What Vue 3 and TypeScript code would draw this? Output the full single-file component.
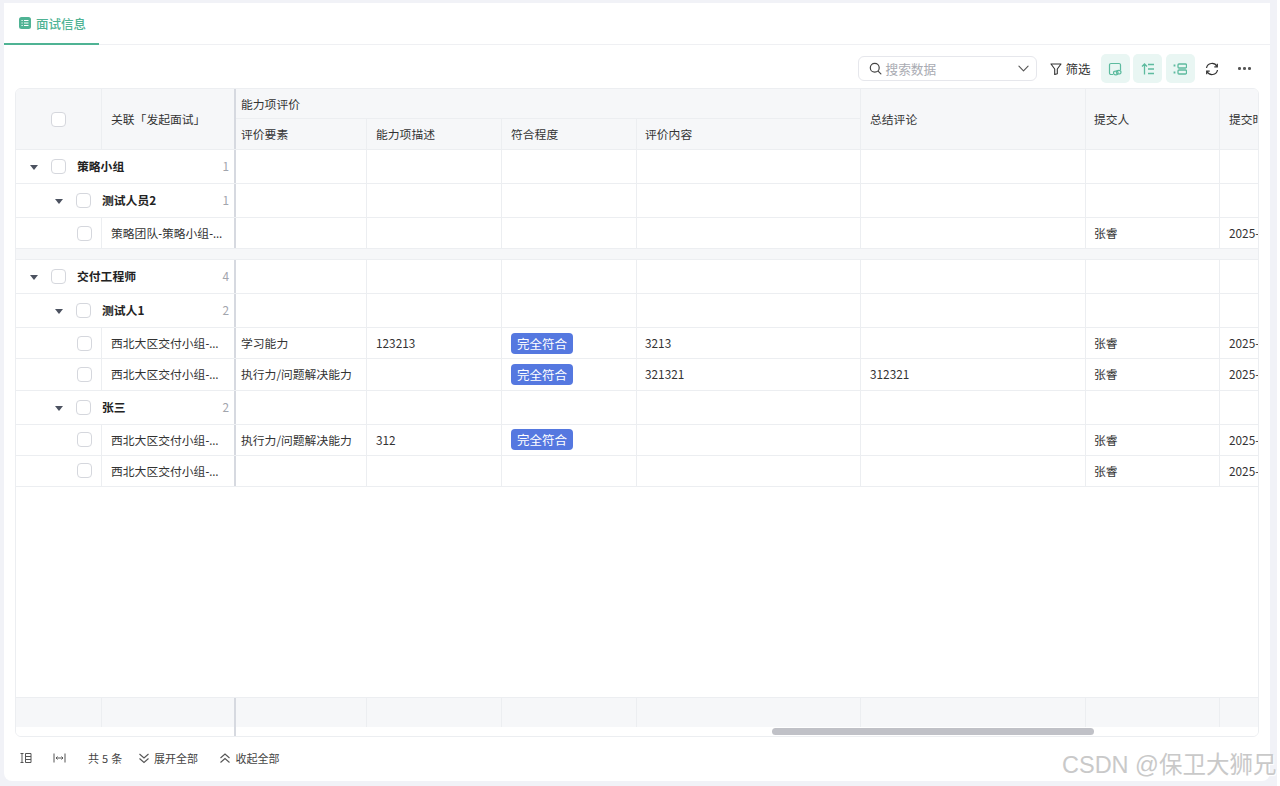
<script setup lang="ts">
type Row = {
  kind: 'group' | 'subgroup' | 'leaf' | 'spacer';
  name?: string;
  count?: number;
  element?: string;
  desc?: string;
  match?: boolean;
  content?: string;
  summary?: string;
  submitter?: string;
  time?: string;
};

const rows: Row[] = [
  { kind: 'group', name: '策略小组', count: 1 },
  { kind: 'subgroup', name: '测试人员2', count: 1 },
  { kind: 'leaf', name: '策略团队-策略小组-规划', submitter: '张睿', time: '2025-06-12' },
  { kind: 'spacer' },
  { kind: 'group', name: '交付工程师', count: 4 },
  { kind: 'subgroup', name: '测试人1', count: 2 },
  { kind: 'leaf', name: '西北大区交付小组-面试一', element: '学习能力', desc: '123213', match: true, content: '3213', submitter: '张睿', time: '2025-06-12' },
  { kind: 'leaf', name: '西北大区交付小组-面试二', element: '执行力/问题解决能力', match: true, content: '321321', summary: '312321', submitter: '张睿', time: '2025-06-12' },
  { kind: 'subgroup', name: '张三', count: 2 },
  { kind: 'leaf', name: '西北大区交付小组-面试三', element: '执行力/问题解决能力', desc: '312', match: true, submitter: '张睿', time: '2025-06-12' },
  { kind: 'leaf', name: '西北大区交付小组-面试四', submitter: '张睿', time: '2025-06-12' },
];
</script>

<template>
  <div class="page">
    <div class="card">
      <div class="tabs">
        <div class="tab">
          <svg class="tab-icon" viewBox="0 0 12 12" width="12" height="12">
            <rect width="12" height="12" rx="2.500" fill="#4fb394" />
            <path d="M2.500 3.500h1.200M5 3.500h4.500M2.500 6h1.200M5 6h4.500M2.500 8.500h1.200M5 8.500h4.500" stroke="#fff" stroke-width="1" fill="none" />
          </svg>
          <span>面试信息</span>
        </div>
      </div>

      <div class="toolbar">
        <div class="search">
          <svg viewBox="0 0 14 14" width="13" height="13" fill="none" stroke="#444" stroke-width="1.300">
            <circle cx="6.200" cy="6.200" r="4.800" />
            <path d="M9.800 9.800l3 3" stroke-linecap="round" />
          </svg>
          <span class="search-text">搜索数据</span>
          <svg class="search-arrow" viewBox="0 0 12 12" width="11" height="11" fill="none" stroke="#555" stroke-width="1.200">
            <path d="M1 3.500l5 5 5-5" stroke-linecap="round" stroke-linejoin="round" />
          </svg>
        </div>
        <div class="filter">
          <svg viewBox="0 0 12 12" width="12" height="12" fill="none" stroke="#333" stroke-width="1.100" stroke-linejoin="round">
            <path d="M1 1h10L7.300 6v4.800L4.700 11.500V6z" />
          </svg>
          <span>筛选</span>
        </div>
        <div class="tool-btn">
          <svg viewBox="0 0 14 14" width="14" height="14" fill="none" stroke="#5dbb9f" stroke-width="1.200">
            <path d="M5 12.500H3A1.500 1.500 0 0 1 1.500 11V3A1.500 1.500 0 0 1 3 1.500h8A1.500 1.500 0 0 1 12.500 3v5" />
            <ellipse cx="7.800" cy="11" rx="2.300" ry="1.800" />
            <ellipse cx="10.700" cy="10.200" rx="2.300" ry="1.800" />
          </svg>
        </div>
        <div class="tool-btn">
          <svg viewBox="0 0 14 14" width="14" height="14" fill="none" stroke="#5dbb9f" stroke-width="1.300">
            <path d="M7 2.500h6M7 7h6M7 11.500h6M3.500 12.500V2M1 4.500L3.500 2 6 4.500" />
          </svg>
        </div>
        <div class="tool-btn">
          <svg viewBox="0 0 14 14" width="14" height="14" fill="none" stroke="#5dbb9f" stroke-width="1.300">
            <rect x="5" y="2" width="8.500" height="4" rx="1" />
            <rect x="5" y="8" width="8.500" height="4" rx="1" />
            <path d="M1.500 2.500v2M1.500 9.500v2" stroke-width="1.800" />
          </svg>
        </div>
        <div class="plain-btn refresh">
          <svg viewBox="0 0 14 14" width="14" height="14" fill="none" stroke="#333" stroke-width="1.200">
            <path d="M1.500 6A5.600 5.600 0 0 1 12 4.500M12.500 8A5.600 5.600 0 0 1 2 9.500" />
            <path d="M12.300 1.800v3h-3M1.700 12.200v-3h3" />
          </svg>
        </div>
        <div class="plain-btn more">
          <i></i><i></i><i></i>
        </div>
      </div>

      <div class="table">
        <div class="thead">
          <div class="frozen">
            <div class="th check-col"><span class="box"></span></div>
            <div class="th name-col">关联「发起面试」</div>
          </div>
          <div class="head-scroll">
            <div class="head-group">
              <div class="head-top">能力项评价</div>
              <div class="head-sub">
                <div class="th c1">评价要素</div>
                <div class="th c2">能力项描述</div>
                <div class="th c3">符合程度</div>
                <div class="th c4">评价内容</div>
              </div>
            </div>
            <div class="th c5">总结评论</div>
            <div class="th c6">提交人</div>
            <div class="th c7">提交时间</div>
          </div>
        </div>

        <div class="tbody">
          <template v-for="(row, i) in rows" :key="i">
            <div v-if="row.kind === 'spacer'" class="spacer"></div>
            <div v-else class="tr" :class="row.kind">
              <div v-if="row.kind === 'leaf'" class="frozen">
                <div class="td check-col leaf-check"><span class="box"></span></div>
                <div class="td name-col"><span class="ellipsis">{{ row.name }}</span></div>
              </div>
              <div v-else class="frozen tree-cell">
                <span class="caret"></span>
                <span class="box"></span>
                <span class="tree-name">{{ row.name }}</span>
                <span class="tree-count">{{ row.count }}</span>
              </div>
              <div class="td c1">{{ row.element }}</div>
              <div class="td c2">{{ row.desc }}</div>
              <div class="td c3"><span v-if="row.match" class="tag">完全符合</span></div>
              <div class="td c4">{{ row.content }}</div>
              <div class="td c5">{{ row.summary }}</div>
              <div class="td c6">{{ row.submitter }}</div>
              <div class="td c7">{{ row.time }}</div>
            </div>
          </template>
        </div>

        <div class="tfoot">
          <div class="frozen">
            <div class="td check-col"></div>
            <div class="td name-col"></div>
          </div>
          <div class="td c1"></div>
          <div class="td c2"></div>
          <div class="td c3"></div>
          <div class="td c4"></div>
          <div class="td c5"></div>
          <div class="td c6"></div>
          <div class="td c7"></div>
        </div>
        <div class="scroll-track">
          <div class="frozen-rest"></div>
          <div class="scroll-thumb"></div>
        </div>
      </div>

      <div class="pager">
        <svg class="pager-icon first" viewBox="0 0 12 12" width="12" height="12" fill="none" stroke="#555" stroke-width="1">
          <path d="M0.500 1.500h3M0.500 10.500h3M2 1.500v9M5.500 1.500h5.500v9H5.500zM5.500 4.500h5.500M5.500 7.500h5.500" />
        </svg>
        <svg class="pager-icon second" viewBox="0 0 13 12" width="13" height="12" fill="none" stroke="#555" stroke-width="1">
          <path d="M1 1.500v9M12 1.500v9M3 6h7M4.500 4.500L3 6l1.500 1.500M8.500 4.500L10 6 8.500 7.500" />
        </svg>
        <span class="total">共 5 条</span>
        <span class="pager-action expand">
          <svg viewBox="0 0 12 12" width="12" height="12" fill="none" stroke="#555" stroke-width="1.100">
            <path d="M1.500 2l4.500 4 4.500-4M1.500 6.500l4.500 4 4.500-4" />
          </svg>
          展开全部
        </span>
        <span class="pager-action collapse">
          <svg viewBox="0 0 12 12" width="12" height="12" fill="none" stroke="#555" stroke-width="1.100">
            <path d="M1.500 6l4.500-4 4.500 4M1.500 10.500l4.500-4 4.500 4" />
          </svg>
          收起全部
        </span>
      </div>
    </div>
    <div class="watermark">CSDN @保卫大狮兄</div>
  </div>
</template>

<style>
html,
body {
  margin: 0;
  background: #f1f2f7;
}
</style>

<style scoped>
.page {
  position: relative;
  width: 1280px;
  height: 786px;
  padding: 3px 10px 5px 4px;
  box-sizing: border-box;
  overflow: hidden;
  font-family: "Noto Sans CJK SC", "Noto Sans", sans-serif;
  font-size: 11.800px;
  color: #333;
}

/* white sliver at the far right of the capture */
.page::after {
  content: "";
  position: absolute;
  top: 0;
  right: 0;
  bottom: 0;
  width: 3px;
  background: #fff;
}

.card {
  height: 100%;
  background: #fff;
  border-radius: 0 0 8px 8px;
  display: flex;
  flex-direction: column;
}

.tabs {
  height: 41px;
  flex: none;
  border-bottom: 1px solid #eff0f3;
  display: flex;
}

.tab {
  width: 95px;
  box-sizing: border-box;
  padding-left: 15px;
  display: flex;
  align-items: center;
  gap: 5px;
  border-bottom: 2px solid #4fb394;
  margin-bottom: -1px;
  color: #4fb394;
  font-size: 12.500px;
  font-weight: 500;
}

.toolbar {
  height: 43px;
  flex: none;
  box-sizing: border-box;
  padding: 4px 11px 0 0;
  display: flex;
  align-items: center;
  justify-content: flex-end;
}

.search {
  width: 179px;
  height: 25px;
  box-sizing: border-box;
  border: 1px solid #e6e7ec;
  border-radius: 6px;
  display: flex;
  align-items: center;
  padding: 0 7px 0 10px;
  gap: 3px;
  color: #a9abb2;
  font-size: 12.700px;
  margin-right: 13px;
}

.search-arrow {
  margin-left: auto;
}

.filter {
  display: flex;
  align-items: center;
  gap: 3px;
  font-size: 12.500px;
  margin-right: 10px;
}

.tool-btn {
  width: 29px;
  height: 29px;
  margin-right: 3.500px;
  border-radius: 5px;
  background: #e9f6f3;
  display: flex;
  align-items: center;
  justify-content: center;
}

.plain-btn {
  width: 29px;
  height: 29px;
  display: flex;
  align-items: center;
  justify-content: center;
}

.refresh {
  margin-left: -1px;
  margin-right: 4px;
}

.more {
  gap: 2px;
}

.more i {
  width: 2.700px;
  height: 2.700px;
  border-radius: 50%;
  background: #555;
}

.table {
  flex: 1;
  margin: 0 11px;
  min-height: 0;
  border: 1px solid #eceef1;
  border-radius: 6px;
  overflow: hidden;
  display: flex;
  flex-direction: column;
}

.thead {
  height: 60px;
  flex: none;
  display: flex;
  background: #f6f7f9;
  border-bottom: 1px solid #eceef1;
}

.frozen {
  width: 218px;
  flex: none;
  display: flex;
  border-right: 2px solid #d6d9e0;
  box-sizing: content-box;
}

.head-scroll {
  flex: 1;
  min-width: 0;
  display: flex;
}

.head-group {
  width: 624px;
  flex: none;
  display: flex;
  flex-direction: column;
  border-right: 1px solid #eceef1;
}

.head-top {
  height: 29px;
  flex: none;
  box-sizing: content-box;
  padding-left: 5px;
  display: flex;
  align-items: center;
  border-bottom: 1px solid #eceef1;
}

.head-sub {
  flex: 1;
  display: flex;
}

.th,
.td {
  box-sizing: border-box;
  display: flex;
  align-items: center;
  border-right: 1px solid #eceef1;
  padding-left: 9px;
  padding-bottom: 1px;
  white-space: nowrap;
  overflow: hidden;
}

.check-col {
  width: 86px;
  padding-left: 0;
  padding-bottom: 0;
  justify-content: center;
  flex: none;
}

.name-col {
  width: 132px;
  flex: none;
  border-right: 0;
}

.c1 {
  width: 131px;
  flex: none;
  padding-left: 5px;
}

.c2 {
  width: 135px;
  flex: none;
}

.c3 {
  width: 135px;
  flex: none;
}

.c4 {
  width: 224px;
  flex: none;
  padding-left: 8px;
}

.head-sub .c4 {
  width: auto;
  flex: 1;
  border-right: 0;
}

.c5 {
  width: 225px;
  flex: none;
}

.c6 {
  width: 134px;
  flex: none;
  padding-left: 8px;
}

.c7 {
  flex: 1;
  min-width: 0;
  border-right: 0;
}

.tbody {
  flex: 1;
  min-height: 0;
}

.tr {
  display: flex;
  border-bottom: 1px solid #eceef1;
  box-sizing: border-box;
}

.tr.group,
.tr.subgroup {
  height: 34px;
}

.tr.leaf {
  height: 31.200px;
}

.spacer {
  height: 11px;
  box-sizing: border-box;
  background: #f6f7f9;
  border-bottom: 1px solid #eceef1;
}

.tree-cell {
  align-items: center;
  box-sizing: border-box;
  width: 220px;
  padding-right: 5px;
}

.group .tree-cell {
  padding-left: 14px;
}

.subgroup .tree-cell {
  padding-left: 39px;
}

.caret {
  width: 0;
  height: 0;
  border-left: 4.500px solid transparent;
  border-right: 4.500px solid transparent;
  border-top: 5px solid #4c5260;
  margin-top: 2px;
  margin-right: 13px;
}

.box {
  width: 15px;
  height: 15px;
  flex: none;
  display: inline-block;
  box-sizing: border-box;
  background: #fff;
  border: 1px solid #d5d7dd;
  border-radius: 4px;
}

.tree-name {
  margin-left: 11px;
  margin-bottom: 2px;
  font-weight: 700;
  color: #222;
}

.tree-count {
  margin-left: auto;
  margin-bottom: 2px;
  color: #a2a5ad;
}

.leaf-check {
  padding-left: 61px;
  justify-content: flex-start;
}

.ellipsis {
  display: block;
  overflow: hidden;
  font-family: "Open Sans", "Noto Sans CJK SC", sans-serif;
  text-overflow: ellipsis;
  width: 113px;
}

.tag {
  height: 21px;
  margin-top: 1px;
  padding: 0 6px;
  display: inline-flex;
  align-items: center;
  background: #5578e0;
  color: #fff;
  border-radius: 4px;
  font-size: 12.500px;
}

.tfoot {
  height: 30px;
  flex: none;
  display: flex;
  background: #f6f7f9;
  border-top: 1px solid #eceef1;
  box-sizing: border-box;
}

.scroll-track {
  height: 9px;
  flex: none;
  display: flex;
  align-items: center;
  background: #fff;
}

.frozen-rest {
  width: 218px;
  height: 100%;
  flex: none;
  border-right: 2px solid #d6d9e0;
}

.scroll-thumb {
  width: 322px;
  height: 7px;
  margin-left: 536px;
  border-radius: 4px;
  background: #c0c1c7;
}

.pager {
  height: 44px;
  flex: none;
  box-sizing: border-box;
  padding: 0 0 2px 16px;
  display: flex;
  align-items: center;
  font-size: 11px;
  color: #444;
}

.pager-icon.second {
  margin-left: 21px;
}

.total {
  margin-left: 22px;
  letter-spacing: 0.300px;
}

.pager-action {
  display: inline-flex;
  align-items: center;
  gap: 4.500px;
}

.expand {
  margin-left: 15px;
}

.collapse {
  margin-left: 21px;
}

.watermark {
  position: absolute;
  left: 1062px;
  top: 749px;
  font-family: "Liberation Sans", "Noto Sans CJK SC", sans-serif;
  font-size: 23.500px;
  line-height: 32px;
  white-space: nowrap;
  color: #c9c9c9;
  text-shadow: 1px 1px 1px #fff;
  z-index: 1;
}
</style>
